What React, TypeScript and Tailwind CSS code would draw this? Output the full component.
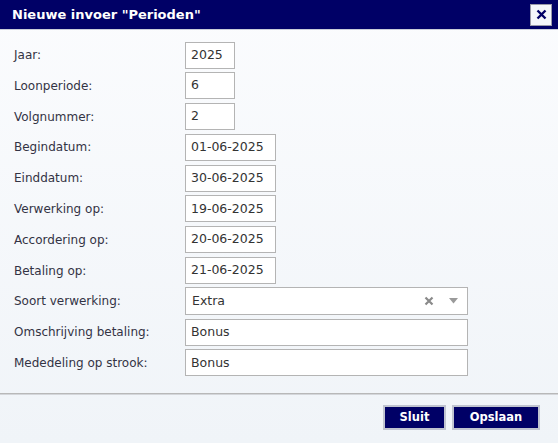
import React from 'react'

type Field = {
  label: string
  value: string
  width: string
  select?: boolean
}

const FIELDS: Field[] = [
  { label: 'Jaar:', value: '2025', width: 'w-[50px]' },
  { label: 'Loonperiode:', value: '6', width: 'w-[50px]' },
  { label: 'Volgnummer:', value: '2', width: 'w-[50px]' },
  { label: 'Begindatum:', value: '01-06-2025', width: 'w-[91px]' },
  { label: 'Einddatum:', value: '30-06-2025', width: 'w-[91px]' },
  { label: 'Verwerking op:', value: '19-06-2025', width: 'w-[91px]' },
  { label: 'Accordering op:', value: '20-06-2025', width: 'w-[91px]' },
  { label: 'Betaling op:', value: '21-06-2025', width: 'w-[91px]' },
  { label: 'Soort verwerking:', value: 'Extra', width: 'w-[283px]', select: true },
  { label: 'Omschrijving betaling:', value: 'Bonus', width: 'w-[283px]' },
  { label: 'Mededeling op strook:', value: 'Bonus', width: 'w-[283px]' },
]

function Row({ field }: { field: Field }) {
  return (
    <div className="flex items-center h-[27px]">
      <div className="w-[171px] text-[12px] text-[#333344]">{field.label}</div>
      {field.select ? (
        <div
          className={`${field.width} h-[28px] flex items-center border border-[#b4b4b4] bg-white pl-[6px] pr-[9px] text-[12.5px] text-[#333]`}
        >
          <span className="flex-1">{field.value}</span>
          <svg width="10" height="10" viewBox="0 0 10 10" className="mr-[15px]">
            <path d="M1.5 1.5 L8.5 8.5 M8.5 1.5 L1.5 8.5" stroke="#8a8a8a" strokeWidth="2.2" />
          </svg>
          <svg width="9" height="6" viewBox="0 0 9 6">
            <path d="M0 0 H9 L4.5 5.5 Z" fill="#9a9a9a" />
          </svg>
        </div>
      ) : (
        <div
          className={`${field.width} h-[27px] flex items-center border border-[#b4b4b4] bg-white px-[5px] text-[12.5px] text-[#333]`}
        >
          {field.value}
        </div>
      )}
    </div>
  )
}

export default function App() {
  return (
    <div
      className="w-[558px] h-[443px] flex flex-col bg-gradient-to-b from-[#fbfcfe] to-[#f0f4f8] overflow-hidden"
      style={{ fontFamily: '"DejaVu Sans", Verdana, sans-serif' }}
    >
      {/* title bar */}
      <div className="h-[30px] shrink-0 flex items-center justify-between bg-[#000066] border-b border-[#c8ccd8] pl-[12px] pr-[6px]">
        <span className="text-white font-bold text-[13px] leading-none">Nieuwe invoer "Perioden"</span>
        <button className="w-[22px] h-[22px] flex items-center justify-center bg-[#f4f6fa] border border-[#9a9aa8]">
          <svg width="11" height="11" viewBox="0 0 11 11">
            <path d="M1.5 1.5 L9.5 9.5 M9.5 1.5 L1.5 9.5" stroke="#000066" strokeWidth="2.4" />
          </svg>
        </button>
      </div>

      {/* form */}
      <div className="flex flex-col gap-[3.8px] pl-[14px] pt-[11.5px]">
        {FIELDS.map(f => (
          <Row key={f.label} field={f} />
        ))}
      </div>

      {/* footer */}
      <div className="mt-[17px] border-t border-[#b8b8b8] border-b border-b-[#d4d6da] h-[2px]" />
      <div className="flex justify-end gap-[6px] pt-[10px] pr-[18px]">
        <button className="w-[63px] h-[25px] bg-[#000066] border-2 border-[#c0c4d0] text-white font-bold text-[11.5px]">
          Sluit
        </button>
        <button className="w-[88px] h-[25px] bg-[#000066] border-2 border-[#c0c4d0] text-white font-bold text-[11.5px]">
          Opslaan
        </button>
      </div>
    </div>
  )
}
